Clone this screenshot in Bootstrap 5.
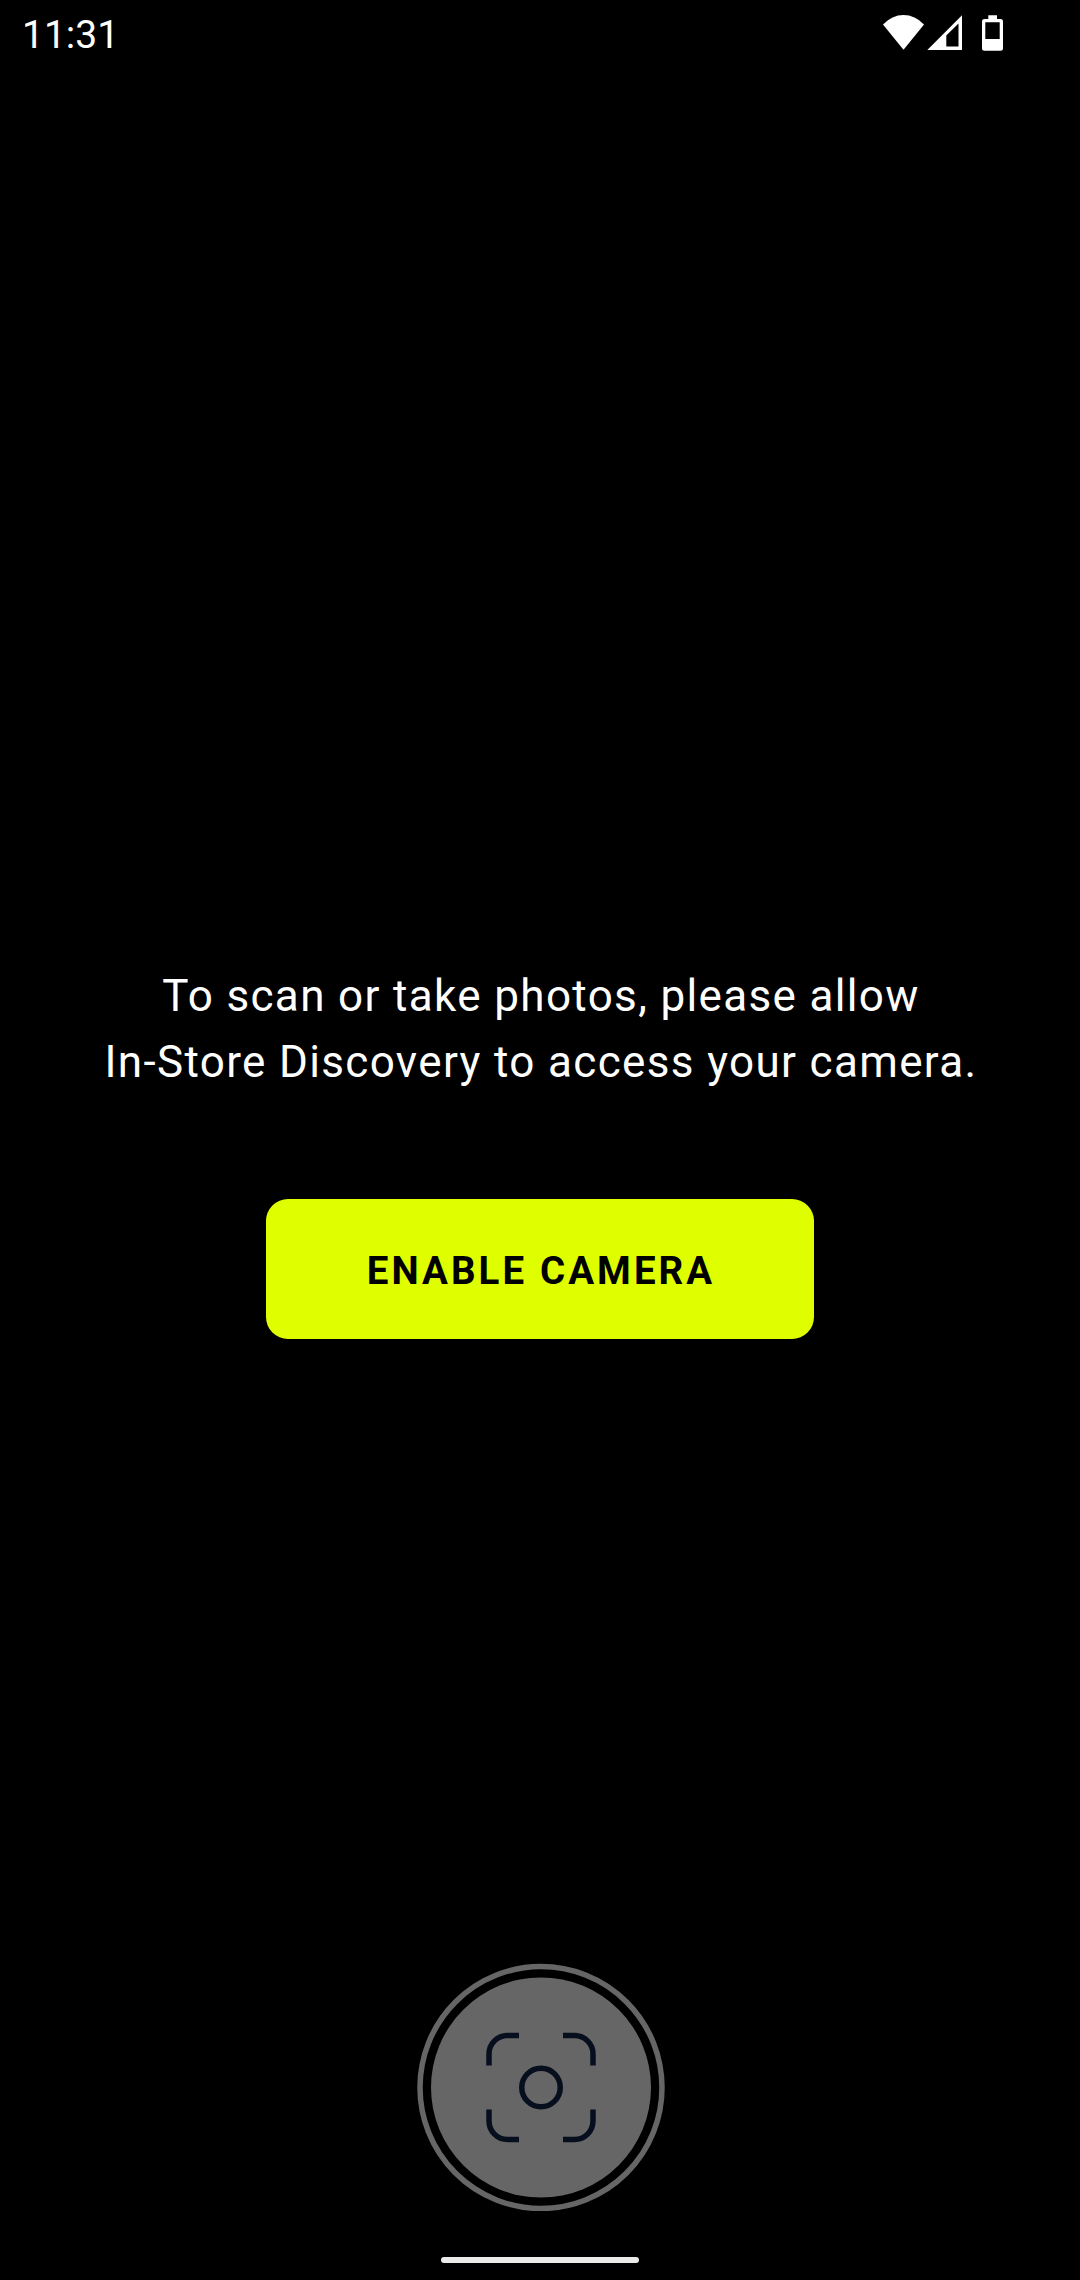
<!DOCTYPE html>
<html lang="en">
<head>
<meta charset="utf-8">
<meta name="viewport" content="width=device-width, initial-scale=1">
<title>Camera access</title>
<link href="https://cdn.jsdelivr.net/npm/bootstrap@5.3.0/dist/css/bootstrap.min.css" rel="stylesheet">
<style>
  body { font-family: Roboto, "Liberation Sans", sans-serif; background: #000; color: #fff; }
  .screen { height: 2280px; }
  .status-bar { height: 67px; padding: 3px 77px 0 22px; }
  .clock { font-size: 39px; line-height: 46px; }
  .status-icons { height: 36px; margin-top: -4px; }
  .permission { padding-top: 896px; gap: 104px; }
  .permission-text { font-size: 44px; line-height: 66px; letter-spacing: 1.35px; padding-left: 2px; }
  .btn-enable {
    --bs-btn-bg: #dfff00; --bs-btn-color: #000; --bs-btn-border-width: 0;
    --bs-btn-hover-bg: #dfff00; --bs-btn-hover-color: #000;
    --bs-btn-border-radius: 22px;
    --bs-btn-font-size: 38.5px; --bs-btn-font-weight: 700; --bs-btn-line-height: 46px;
    --bs-btn-padding-y: 0; --bs-btn-padding-x: 0;
    width: 548px; height: 140px; padding: 3px 0 0 2px; letter-spacing: .08em;
  }
  .shutter { width: 248px; height: 248px; margin-left: 1px; }
  .home-handle { width: 198px; height: 6px; border-radius: 3px; background: #ebebe9; margin: 46px 0 17px; }
</style>
<script src="https://cdn.jsdelivr.net/npm/bootstrap@5.3.0/dist/js/bootstrap.bundle.min.js"></script>
</head>
<body>
<div class="screen d-flex flex-column overflow-hidden">
  <header class="status-bar d-flex align-items-center justify-content-between">
    <span class="clock">11:31</span>
    <span class="status-icons d-flex align-items-start">
      <svg width="121" height="36" viewBox="0 0 121 36" fill="#fff" aria-hidden="true">
        <!-- wifi -->
        <path d="M1 9.500Q10 0 21.500 0T42 9.500L21.500 34.700Z"/>
        <!-- mobile signal -->
        <path fill-rule="evenodd" d="M45.300 35 80 .3V35ZM64.300 20.500V31.500H76.500V8.500Z"/>
        <!-- battery -->
        <path fill-rule="evenodd" d="M106.300 .3h8.700V4h3.500a2.500 2.500 0 0 1 2.500 2.500v26.700a2.500 2.500 0 0 1-2.500 2.500h-16a2.500 2.500 0 0 1-2.500-2.500V6.500a2.500 2.500 0 0 1 2.500-2.500h3.800ZM103.300 7.300V24h14.400V7.300Z"/>
      </svg>
    </span>
  </header>

  <main class="permission d-flex flex-column align-items-center text-center">
    <p class="permission-text mb-0">To scan or take photos, please allow<br>In-Store Discovery to access your camera.</p>
    <button type="button" class="btn btn-enable d-flex align-items-center justify-content-center">ENABLE CAMERA</button>
  </main>

  <footer class="mt-auto d-flex flex-column align-items-center">
    <svg class="shutter" viewBox="0 0 248 248" fill="none" role="img" aria-label="Scan">
      <g transform="translate(0 .5)">
        <circle cx="124" cy="124" r="121" stroke="#666" stroke-width="5.500"/>
        <circle cx="124" cy="124" r="110" fill="#666"/>
        <g stroke="#070f1e" stroke-width="5.500">
          <circle cx="124" cy="124" r="19.250"/>
          <path d="M72 102V90.500A18.500 18.500 0 0 1 90.500 72H102M146 72h11.500A18.500 18.500 0 0 1 176 90.500V102M176 146v11.500A18.500 18.500 0 0 1 157.500 176H146M102 176H90.500A18.500 18.500 0 0 1 72 157.500V146"/>
        </g>
      </g>
    </svg>
    <div class="home-handle"></div>
  </footer>
</div>
</body>
</html>
